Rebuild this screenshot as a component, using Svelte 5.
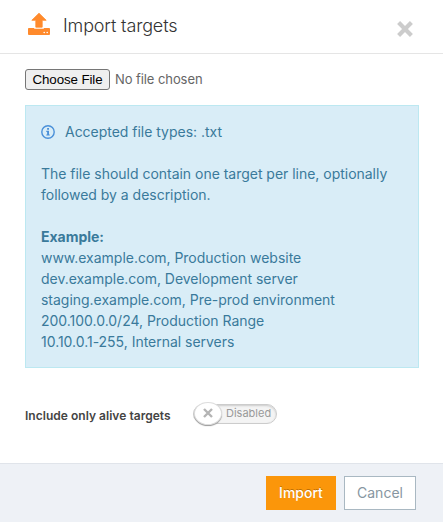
<script lang="ts">
  let alive: boolean = $state(false);

  const examples: string[] = [
    'www.example.com, Production website',
    'dev.example.com, Development server',
    'staging.example.com, Pre-prod environment',
    '200.100.0.0/24, Production Range',
    '10.10.0.1-255, Internal servers'
  ];
</script>

<div class="modal">
  <header class="modal__header">
    <svg class="modal__icon" viewBox="0 0 24 24" width="24" height="24">
      <path
        d="M12 1.2 19.2 8.3H15.2V15.2H8.8V8.3H4.8Z"
        fill="#ff8a2c"
        stroke="#ff8a2c"
        stroke-width="0.8"
        stroke-linejoin="round"
      />
      <path
        d="M1.9 15.9H7.2V16.7H16.8V15.9H22.1Q23 15.9 23 16.8V22.1Q23 23 22.1 23H1.9Q1 23 1 22.1V16.8Q1 15.9 1.9 15.9Z"
        fill="#ff8a2c"
      />
      <circle cx="17.2" cy="20.5" r="0.8" fill="#fff" />
      <circle cx="20.2" cy="20.5" r="0.8" fill="#fff" />
    </svg>
    <h4 class="modal__title">Import targets</h4>
    <button class="close" aria-label="Close">
      <svg viewBox="0 0 16 16" width="16" height="16">
        <path d="M1.6 1.6 14.4 14.4M14.4 1.6 1.6 14.4" stroke="#ccc" stroke-width="4.2" />
      </svg>
    </button>
  </header>

  <div class="modal__body">
    <div class="file">
      <button class="file__button">Choose File</button>
      <span class="file__name">No file chosen</span>
    </div>

    <div class="info">
      <p class="info__types">
        <svg viewBox="0 0 14 14" width="14" height="14">
          <circle cx="7" cy="7" r="6.2" fill="none" stroke="#4a90d9" stroke-width="1.4" />
          <path d="M6.1 3H8V4.7H6.1ZM5.3 5.8H8V9.4H8.8V10.6H5.3V9.4H6.1V7H5.3Z" fill="#4a90d9" />
        </svg>
        <span>Accepted file types: .txt</span>
      </p>
      <p>The file should contain one target per line, optionally followed by a description.</p>
      <strong>Example:</strong>
      {#each examples as line}
        <div>{line}</div>
      {/each}
    </div>

    <div class="alive">
      <span class="alive__label">Include only alive targets</span>
      <button
        class="switch"
        role="switch"
        aria-checked={alive}
        aria-label="Include only alive targets"
        onclick={() => (alive = !alive)}
      >
        <span class="switch__knob">
          <svg viewBox="0 0 10 10" width="10" height="10">
            <path d="M1 1 9 9M9 1 1 9" stroke="#b4b4b4" stroke-width="2.4" />
          </svg>
        </span>
        <span class="switch__text">{alive ? 'Enabled' : 'Disabled'}</span>
      </button>
    </div>
  </div>

  <footer class="modal__footer">
    <button class="btn btn--primary">Import</button>
    <button class="btn">Cancel</button>
  </footer>
</div>

<style>
  :global(body) {
    margin: 0;
    background: #fff;
  }

  .modal {
    display: flex;
    flex-direction: column;
    box-sizing: border-box;
    height: 522px;
    font-family: Inter, 'Liberation Sans', sans-serif;
    font-size: 14px;
    line-height: 21px;
    color: #555;
  }

  .modal__header {
    display: flex;
    align-items: flex-start;
    box-sizing: border-box;
    height: 54px;
    padding: 12px 30px 0 27px;
    border-bottom: 1px solid #e5e5e5;
  }

  .modal__title {
    flex: 1;
    margin: 1px 0 0 12px;
    font-size: 18px;
    font-weight: 300;
    line-height: 26px;
    letter-spacing: -0.15px;
    color: #333;
  }

  .close {
    display: flex;
    margin: 9px 0 0;
    padding: 0;
    border: 0;
    background: none;
  }

  .modal__body {
    flex: 1;
    padding: 15px 24px 0 25px;
  }

  .file {
    display: flex;
    align-items: center;
    height: 21px;
  }

  .file__button {
    box-sizing: border-box;
    width: 85px;
    height: 21px;
    margin-right: 5px;
    padding: 0;
    border: 1px solid #767676;
    border-radius: 3px;
    background: #efefef;
    font: 13.333px 'Liberation Sans', Arial, sans-serif;
    letter-spacing: -0.1px;
    color: #000;
  }

  .file__name {
    font-size: 13px;
    letter-spacing: -0.08px;
    color: #666;
  }

  .info {
    box-sizing: border-box;
    height: 263px;
    margin-top: 15px;
    padding: 15px;
    border: 1px solid #bce8f1;
    background: #d9edf7;
    letter-spacing: -0.02px;
    color: #3a7a9b;
  }

  .info p {
    margin: 0 0 21px;
  }

  .info strong {
    display: block;
    font-weight: 700;
  }

  .info .info__types {
    display: flex;
    align-items: center;
    gap: 10px;
  }

  .alive {
    display: flex;
    align-items: center;
    height: 24px;
    margin-top: 34px;
  }

  .alive__label {
    width: 168px;
    padding-top: 2px;
    font-size: 12px;
    font-weight: 600;
    letter-spacing: 0.03px;
    color: #444;
    white-space: nowrap;
  }

  .switch {
    display: flex;
    align-items: center;
    box-sizing: border-box;
    width: 84px;
    height: 20px;
    padding: 0;
    border: 1px solid #ccc;
    border-radius: 10px;
    background: #f4f4f4;
    box-shadow: inset 0 1px 2px #ccc;
    font: 11px Inter, 'Liberation Sans', sans-serif;
    color: #999;
  }

  .switch__knob {
    display: flex;
    align-items: center;
    justify-content: center;
    flex: none;
    box-sizing: border-box;
    width: 28px;
    height: 23px;
    margin: -2px 4px 0 0;
    border: 1px solid #ddd;
    border-radius: 50%;
    background: #fff;
    box-shadow: 0 1px 1px #999;
  }

  .switch__text {
    margin-top: -2px;
  }

  .modal__footer {
    display: flex;
    justify-content: flex-end;
    gap: 8px;
    box-sizing: border-box;
    height: 59px;
    padding: 12px 27px 0 0;
    border-top: 1px solid #e0e4ea;
    background: #eef1f6;
  }

  .btn {
    box-sizing: border-box;
    width: 72px;
    height: 34px;
    padding: 0 0 2px;
    border: 1px solid #a9b8c2;
    background: #fff;
    font: inherit;
    color: #8796a1;
  }

  .btn--primary {
    width: 70px;
    border-color: #fb960a;
    background: #fb960a;
    font-weight: 500;
    color: #fff;
    text-shadow: 0 -1px 0 rgba(0, 0, 0, 0.25);
  }
</style>
